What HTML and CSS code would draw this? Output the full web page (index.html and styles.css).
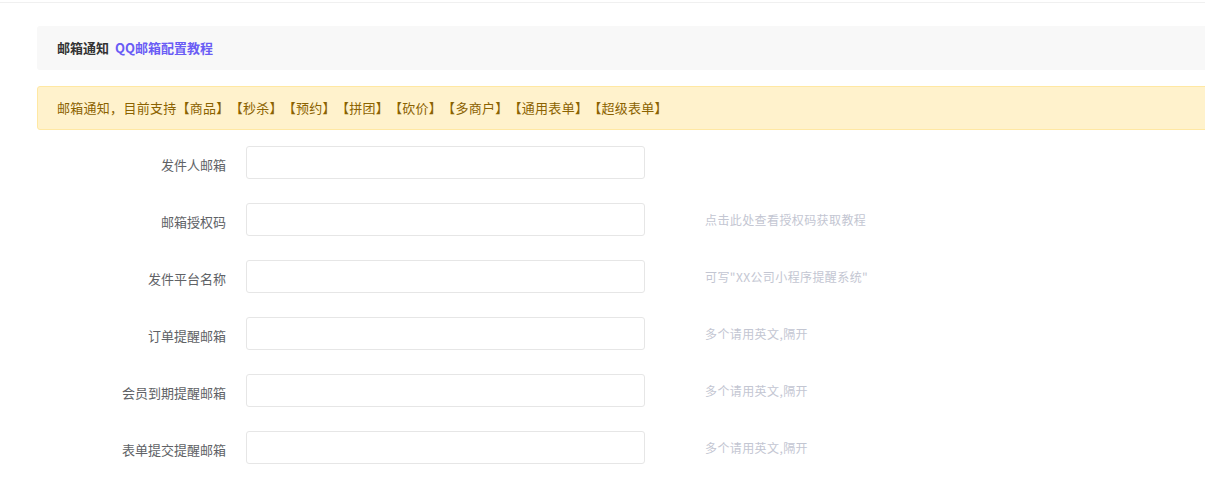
FILE: index.html
```html
<!DOCTYPE html>
<html>
<head>
    <meta charset="utf-8">
    <title>邮箱通知</title>
    <link rel="stylesheet" href="styles.css">
</head>
<body>
    <div class="topbar"></div>
    <div class="page">
        <div class="panel-title">
            邮箱通知 <a class="title-link" href="#">QQ邮箱配置教程</a>
        </div>

        <div class="alert">
            邮箱通知，目前支持【商品】【秒杀】【预约】【拼团】【砍价】【多商户】【通用表单】【超级表单】
        </div>

        <div class="form">
            <div class="form-row">
                <label class="form-label">发件人邮箱</label>
                <input class="form-input" type="text">
            </div>
            <div class="form-row">
                <label class="form-label">邮箱授权码</label>
                <input class="form-input" type="text">
                <span class="form-tip">点击此处查看授权码获取教程</span>
            </div>
            <div class="form-row">
                <label class="form-label">发件平台名称</label>
                <input class="form-input" type="text">
                <span class="form-tip">可写"XX公司小程序提醒系统"</span>
            </div>
            <div class="form-row">
                <label class="form-label">订单提醒邮箱</label>
                <input class="form-input" type="text">
                <span class="form-tip">多个请用英文,隔开</span>
            </div>
            <div class="form-row">
                <label class="form-label">会员到期提醒邮箱</label>
                <input class="form-input" type="text">
                <span class="form-tip">多个请用英文,隔开</span>
            </div>
            <div class="form-row">
                <label class="form-label">表单提交提醒邮箱</label>
                <input class="form-input" type="text">
                <span class="form-tip">多个请用英文,隔开</span>
            </div>
        </div>
    </div>
</body>
</html>
```

FILE: styles.css
```css
html, body {
    margin: 0;
    padding: 0;
    background: #fff;
    overflow: hidden;
}

body {
    font-family: "Microsoft YaHei", "Noto Sans CJK SC", sans-serif;
    font-size: 13px;
    color: #333;
    text-spacing-trim: space-all;
    font-feature-settings: "halt" 0, "chws" 0;
}

.topbar {
    height: 2px;
    border-bottom: 1px solid #f0f0f0;
}

.page {
    padding-top: 23px;
    padding-left: 37px;
    margin-right: -20px;
}

.panel-title {
    height: 44px;
    line-height: 44px;
    padding-left: 20px;
    background: #f8f8f8;
    border-radius: 3px;
    font-weight: bold;
    color: #333;
    word-spacing: 3px;
}

.title-link {
    color: #6a5cf5;
    text-decoration: none;
}

.alert {
    margin-top: 16px;
    height: 42px;
    line-height: 42px;
    padding-left: 19px;
    background: #fff2cc;
    border: 1px solid #ffe8a3;
    border-radius: 3px;
    color: #8b6200;
    letter-spacing: 0.28px;
}

.form {
    padding-top: 16px;
}

.form-row {
    display: flex;
    align-items: center;
    height: 33px;
    margin-bottom: 24px;
}

.form-label {
    width: 209px;
    padding-right: 20px;
    box-sizing: border-box;
    text-align: right;
    color: #606266;
    padding-top: 3px;
}

.form-input {
    width: 399px;
    height: 33px;
    box-sizing: border-box;
    border: 1px solid #e6e6e6;
    border-radius: 3px;
    padding: 0 10px;
    outline: none;
}

.form-tip {
    margin-left: 60px;
    font-size: 12px;
    color: #c3c6d2;
    letter-spacing: 0.4px;
}
```
